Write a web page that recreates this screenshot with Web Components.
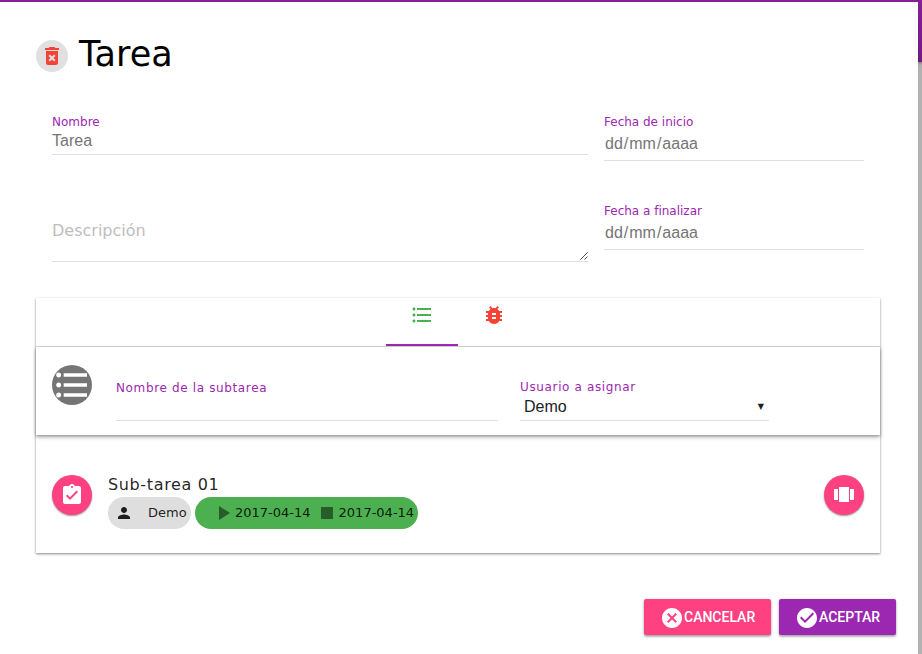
<!DOCTYPE html>
<html lang="es">
<head>
<meta charset="utf-8">
<title>Tarea</title>
<style>
html,body{margin:0;height:100%;overflow:hidden}
body{font-family:"DejaVu Sans",sans-serif;color:rgba(0,0,0,.87);background:linear-gradient(#861e98 0,#701a80 62px,#858585 62px,#adadad 65px,#b2b2b2 68px)}
</style>
</head>
<body>
<task-dialog></task-dialog>
<script>
const define = (name, html, setup) => customElements.define(name, class extends HTMLElement {
  constructor() {
    super();
    const t = document.createElement('template');
    t.innerHTML = html;
    this.attachShadow({mode: 'open'}).append(t.content.cloneNode(true));
  }
  connectedCallback() { if (setup) setup(this, this.shadowRoot); }
});

const icons = {
  trash: '<path d="M6 19c0 1.1.9 2 2 2h8c1.1 0 2-.9 2-2V7H6v12zm2.46-7.12 1.41-1.41L12 12.59l2.12-2.12 1.41 1.41L13.41 14l2.12 2.12-1.41 1.41L12 15.41l-2.12 2.12-1.41-1.41L10.59 14l-2.13-2.12zM15.5 4l-1-1h-5l-1 1H5v2h14V4z"/>',
  list: '<path d="M4 10.5c-.83 0-1.5.67-1.5 1.5s.67 1.5 1.5 1.5 1.5-.67 1.5-1.5-.67-1.5-1.5-1.5zm0-6c-.83 0-1.5.67-1.5 1.5S3.170 7.500 4 7.500 5.500 6.830 5.500 6 4.830 4.500 4 4.500zm0 12c-.83 0-1.5.68-1.5 1.5s.68 1.5 1.5 1.5 1.5-.68 1.500-1.500-.67-1.500-1.500-1.500zM7 19h14v-2H7v2zm0-6h14v-2H7v2zm0-8v2h14V5H7z"/>',
  bug: '<path d="M20 8h-2.810c-.45-.78-1.070-1.450-1.820-1.960L17 4.410 15.590 3l-2.170 2.170C12.960 5.060 12.490 5 12 5c-.49 0-.96.060-1.410.17L8.410 3 7 4.410l1.620 1.630C7.880 6.550 7.260 7.220 6.810 8H4v2h2.090c-.05.33-.09.660-.09 1v1H4v2h2v1c0 .34.04.67.090 1H4v2h2.810c1.040 1.790 2.970 3 5.190 3s4.150-1.210 5.190-3H20v-2h-2.090c.05-.33.09-.66.090-1v-1h2v-2h-2v-1c0-.34-.04-.67-.09-1H20V8zm-6 8h-4v-2h4v2zm0-4h-4v-2h4v2z"/>',
  assigned: '<path d="M19 3h-4.180C14.400 1.840 13.300 1 12 1c-1.300 0-2.400.84-2.820 2H5c-1.100 0-2 .9-2 2v14c0 1.100.9 2 2 2h14c1.100 0 2-.9 2-2V5c0-1.100-.9-2-2-2zm-7 0c.55 0 1 .45 1 1s-.45 1-1 1-1-.45-1-1 .45-1 1-1zm-2 14-4-4 1.410-1.410L10 14.170l6.590-6.590L18 9l-8 8z"/>',
  person: '<path d="M12 12c2.210 0 4-1.790 4-4s-1.790-4-4-4-4 1.790-4 4 1.790 4 4 4zm0 2c-2.670 0-8 1.340-8 4v2h16v-2c0-2.660-5.330-4-8-4z"/>',
  play: '<path d="M8 5v14l11-7z"/>',
  stop: '<path d="M6 6h12v12H6z"/>',
  carousel: '<path d="M7 19h10V4H7v15zm-5-2h4V6H2v11zM18 6v11h4V6h-4z"/>',
  cancel: '<path d="M12 2C6.470 2 2 6.470 2 12s4.470 10 10 10 10-4.470 10-10S17.530 2 12 2zm5 13.590L15.590 17 12 13.410 8.410 17 7 15.590 10.590 12 7 8.410 8.410 7 12 10.590 15.590 7 17 8.410 13.410 12 17 15.590z"/>',
  check: '<path d="M12 2C6.480 2 2 6.480 2 12s4.480 10 10 10 10-4.480 10-10S17.520 2 12 2zm-2 15-5-5 1.410-1.410L10 14.170l7.590-7.590L19 8l-9 9z"/>'
};

define('md-icon', `<style>:host{display:inline-block;width:24px;height:24px;flex:none}svg{display:block;width:100%;height:100%;fill:currentColor}</style><svg viewBox="0 0 24 24"></svg>`,
  (el, root) => { root.querySelector('svg').innerHTML = icons[el.getAttribute('name')]; });

define('round-badge', `<style>:host{display:flex;flex:none;align-items:center;justify-content:center;width:40px;height:40px;border-radius:50%;background:#ff4081;color:#fff;box-shadow:0 1px 2px rgba(0,0,0,.34),0 1px 1px rgba(0,0,0,.1)}
:host([kind=delete]){width:32px;height:32px;background:#e0e0e0;color:#f44336;box-shadow:none}
:host([kind=avatar]){background:#757575;box-shadow:none;overflow:hidden}</style><slot></slot>`);

define('form-field', `<style>:host{display:block;box-sizing:border-box;border-bottom:1px solid #e0e0e0}
.label{display:block;height:16px;font-size:12px;line-height:16px;color:#9c27b0;white-space:nowrap}
.value{display:flex;font:16px/20px "Liberation Sans",sans-serif;color:var(--value-color,#757575);padding:var(--value-pad,0)}
</style><span class="label"></span><div class="value"><slot></slot></div>`,
  (el, root) => { root.querySelector('.label').textContent = el.getAttribute('label'); });

define('date-mask', `<style>:host{display:block;white-space:nowrap}i{font-style:normal;margin:0 1px}</style>dd<i>/</i>mm<i>/</i>aaaa`);

define('description-field', `<style>:host{display:flex;justify-content:space-between;align-items:flex-end;box-sizing:border-box;height:43px;border-bottom:1px solid #e0e0e0;color:#bdbdbd;font-size:16px;line-height:20px}
span{align-self:flex-start;margin-top:2px}svg{display:block;width:8px;height:8px;margin:0 0 1px;stroke:#555;fill:none}</style><span><slot></slot></span><svg viewBox="0 0 8 8"><path d="M.5 7.500 7.500.5M4.500 7.500 7.500 4.500"/></svg>`);

define('tab-bar', `<style>:host{display:flex;justify-content:center;height:48px;border-bottom:1px solid #d8d8d8}
div{box-sizing:border-box;width:72px;height:48px;padding-top:5px;display:flex;justify-content:center}
.active{border-bottom:2px solid #9c27b0}md-icon{color:#4caf50}.bugs{color:#f44336}</style>
<div class="active"><md-icon name="list"></md-icon></div><div><md-icon class="bugs" name="bug"></md-icon></div>`);

define('subtask-form', `<style>:host{display:flex;box-sizing:border-box;height:88px;padding:18px 16px 0;background:#fff;letter-spacing:.64px;box-shadow:0 2px 4px rgba(0,0,0,.34),0 1px 2px rgba(0,0,0,.16)}
.name{width:382px;height:41px;margin:15px 22px 0 24px}
.user{width:249px;height:42px;margin-top:14px;--value-color:#212121;--value-pad:2px 5px 0 4px}
.user b{font:8px/20px "DejaVu Sans",sans-serif;letter-spacing:0;margin-left:auto}
.user span{letter-spacing:0}md-icon{width:40px;height:40px}</style>
<round-badge kind="avatar"><md-icon name="list"></md-icon></round-badge>
<form-field class="name" label="Nombre de la subtarea"></form-field>
<form-field class="user" label="Usuario a asignar"><span>Demo</span><b>▼</b></form-field>`);

define('info-chip', `<style>:host{display:flex;box-sizing:border-box;align-items:center;height:32px;border-radius:16px;background:#dedede;font-size:13px;line-height:32px;white-space:nowrap;color:rgba(0,0,0,.87)}
:host([tone=dates]){background:#4caf50}</style><slot></slot>`);

define('subtask-item', `<style>:host{display:flex;box-sizing:border-box;height:118px;padding:40px 16px 0}
.body{flex:1;margin-left:16px}.title{font-size:16px;line-height:20px;letter-spacing:.64px;margin-bottom:2px}
.chips{display:flex;gap:4px}.who{width:83px;padding-left:7px}
.who md-icon{width:18px;height:18px}.who span{margin-left:15px}
.when{width:223px;padding-left:16px}.when md-icon{opacity:.54}.when .stop{margin-left:4px}</style>
<round-badge><md-icon name="assigned"></md-icon></round-badge>
<div class="body"><div class="title">Sub-tarea 01</div><div class="chips">
<info-chip class="who"><md-icon name="person"></md-icon><span>Demo</span></info-chip>
<info-chip class="when" tone="dates"><md-icon name="play"></md-icon><span>2017-04-14</span><md-icon class="stop" name="stop"></md-icon><span>2017-04-14</span></info-chip></div></div>
<round-badge><md-icon name="carousel"></md-icon></round-badge>`);

define('action-button', `<style>:host{display:flex;box-sizing:border-box;align-items:center;height:36px;padding:0 16px;border-radius:2px;background:#ff4081;color:#fff;font:500 14px/36px Roboto,sans-serif;white-space:nowrap;box-shadow:0 2px 2px rgba(0,0,0,.16),0 1px 3px rgba(0,0,0,.3)}
:host([primary]){background:#9c27b0}</style><slot></slot>`);

define('task-dialog', `<style>:host{display:block;padding-top:2px}
.sheet{box-sizing:border-box;width:918px;height:652px;background:#fff;padding:28px 22px 0 36px}
header{display:flex;align-items:center;height:48px;gap:11px;color:#000;font-size:35px;line-height:48px}
header round-badge{margin-top:3px}
.fields{display:grid;grid-template-columns:536px 260px;column-gap:16px;margin:36px 0 0 16px;height:184px}
.main{display:flex;flex-direction:column}.name{height:41px;--value-pad:1px 0 0}
.desc{margin-top:64px}.dates{display:flex;flex-direction:column;gap:42px}
.dates form-field{height:47px;--value-pad:4px 1px 0}
.card{width:844px;box-shadow:0 1px 2px rgba(0,0,0,.4),0 1px 4px rgba(0,0,0,.1)}
footer{display:flex;justify-content:flex-end;gap:8px;margin-top:46px}.cancel{width:127px}.accept{width:117px}
footer md-icon{margin-top:2px}
</style>
<div class="sheet">
<header><round-badge kind="delete"><md-icon name="trash"></md-icon></round-badge><span>Tarea</span></header>
<div class="fields"><div class="main"><form-field class="name" label="Nombre">Tarea</form-field><description-field class="desc">Descripción</description-field></div>
<div class="dates"><form-field label="Fecha de inicio"><date-mask></date-mask></form-field><form-field label="Fecha a finalizar"><date-mask></date-mask></form-field></div></div>
<div class="card"><tab-bar></tab-bar><subtask-form></subtask-form><subtask-item></subtask-item></div>
<footer><action-button class="cancel"><md-icon name="cancel"></md-icon><span>CANCELAR</span></action-button><action-button class="accept" primary><md-icon name="check"></md-icon><span>ACEPTAR</span></action-button></footer>
</div>`);
</script>
</body>
</html>
